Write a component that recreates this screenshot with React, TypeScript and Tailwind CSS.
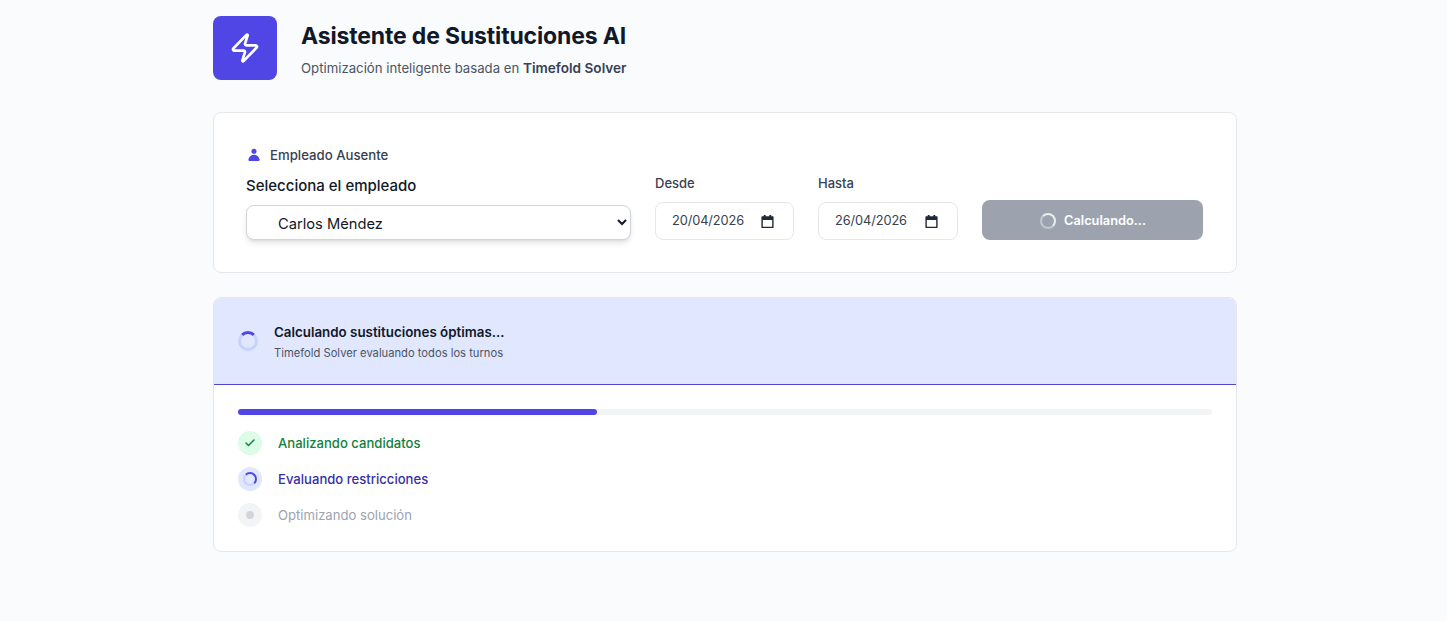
import React from "react";
import { Zap, Check } from "lucide-react";

function DateField({ label, value, width }: { label: string; value: string; width: string }) {
  return (
    <div className={width}>
      <label className="mb-[9px] block pt-px text-[13px] leading-5 font-medium text-[#374151]">{label}</label>
      <div className="flex h-[38px] items-center rounded-lg border border-[#e5e7eb] bg-white pr-[18px] pl-4">
        <input readOnly value={value} className="w-0 min-w-0 flex-1 bg-transparent text-[12.8px] tracking-[-0.1px] text-[#374151] outline-none" />
        <svg viewBox="0 0 16 16" className="h-[15px] w-[15px] fill-[#1f2937]">
          <path d="M4 1h2v1.5h4V1h2v1.5h1.5c.55 0 1 .45 1 1V14c0 .55-.45 1-1 1h-11c-.55 0-1-.45-1-1V3.5c0-.55.45-1 1-1H4V1zm-1 5.5v7h10v-7H3z" />
        </svg>
      </div>
    </div>
  );
}

export default function App() {
  return (
    <div className="min-h-[621px] bg-[#f9fbfd] font-['Inter','Liberation_Sans',sans-serif] text-[#111827]">
      <div className="ml-[213px] w-[1024px] pt-4">
        <header className="flex items-start gap-6">
          <div className="flex h-16 w-16 items-center justify-center rounded-lg bg-[#4f46e5]">
            <Zap className="h-8 w-8 text-white" strokeWidth={2} />
          </div>
          <div className="pt-[4px]">
            <h1 className="text-[23px] leading-8 font-bold tracking-[-0.16px] text-[#111827]">Asistente de Sustituciones AI</h1>
            <p className="mt-[6px] text-[13.2px] leading-5 text-[#4b5563]">
              Optimización inteligente basada en <strong className="text-[13.6px] font-semibold text-[#374151]">Timefold Solver</strong>
            </p>
          </div>
        </header>

        <section className="mt-8 rounded-lg border border-[#e5e7eb] bg-white p-8">
          <div className="flex items-end gap-6">
            <div className="w-[385px]">
              <div className="flex items-center gap-2 text-[13.2px] leading-5 font-medium text-[#374151]">
                <svg viewBox="0 0 20 20" className="h-4 w-4 fill-[#4f46e5]">
                  <path d="M10 8.5a3.2 3.2 0 100-6.4 3.2 3.2 0 000 6.4zM3 15.6c-.2.9.2 1.9 1.2 1.9h11.6c1 0 1.4-1 1.2-1.9C16.2 12 13.4 9.8 10 9.8S3.8 12 3 15.6z" />
                </svg>
                Empleado Ausente
              </div>
              <label className="mt-[11px] block text-[15px] leading-5 font-medium text-[#111827]">Selecciona el empleado</label>
              <select className="mt-[9px] h-[35px] w-full rounded-lg border border-[#d1d5db] bg-white pt-0.5 pl-[27px] text-[14.7px] text-[#111827] shadow-md">
                <option>Carlos Méndez</option>
              </select>
            </div>
            <DateField label="Desde" value="20/04/2026" width="w-[139px]" />
            <DateField label="Hasta" value="26/04/2026" width="w-[140px]" />
            <button disabled className="flex h-10 w-[221px] items-center justify-center gap-2 rounded-lg bg-[#9ca3af] pt-px pl-px text-[12.8px] font-semibold text-white">
              <span className="h-4 w-4 rounded-full border-2 border-white/40 border-t-white/80 border-r-white/80" />
              Calculando...
            </button>
          </div>
        </section>

        <section className="mt-6 overflow-hidden rounded-lg border border-[#e5e7eb] bg-white">
          <div className="flex h-[87px] items-center gap-4 border-b border-[#5145cd] bg-[#e0e7ff] px-6">
            <span className="h-5 w-5 rounded-full border-[3px] border-[#c7d2fe] border-t-[#4f46e5]" />
            <div>
              <div className="text-[13.35px] leading-5 font-semibold text-[#111827]">Calculando sustituciones óptimas...</div>
              <div className="mt-[3px] text-[11.2px] leading-4 text-[#4b5563]">Timefold Solver evaluando todos los turnos</div>
            </div>
          </div>
          <div className="p-6">
            <div className="h-1.5 w-full rounded-full bg-[#f3f4f6]">
              <div className="h-1.5 w-[36.9%] rounded-full bg-[#4f46e5]" />
            </div>
            <div className="mt-4 flex flex-col gap-3">
              <div className="flex items-center gap-4">
                <span className="flex h-6 w-6 items-center justify-center rounded-full bg-[#dcfce7]">
                  <Check className="h-3 w-3 text-[#15803d]" strokeWidth={3} />
                </span>
                <span className="text-[13.1px] leading-6 font-medium text-[#15803d]">Analizando candidatos</span>
              </div>
              <div className="flex items-center gap-4">
                <span className="flex h-6 w-6 items-center justify-center rounded-full bg-[#e0e7ff]">
                  <span className="h-3.5 w-3.5 rounded-full border-2 border-[#c7d2fe] border-t-[#4f46e5] border-r-[#4f46e5]" />
                </span>
                <span className="text-[13.1px] leading-6 font-medium text-[#3730a3]">Evaluando restricciones</span>
              </div>
              <div className="flex items-center gap-4">
                <span className="flex h-6 w-6 items-center justify-center rounded-full bg-[#f3f4f6]">
                  <span className="h-2 w-2 rounded-full bg-[#d1d5db]" />
                </span>
                <span className="text-[13.1px] leading-6 text-[#9ca3af]">Optimizando solución</span>
              </div>
            </div>
          </div>
        </section>
      </div>
    </div>
  );
}
